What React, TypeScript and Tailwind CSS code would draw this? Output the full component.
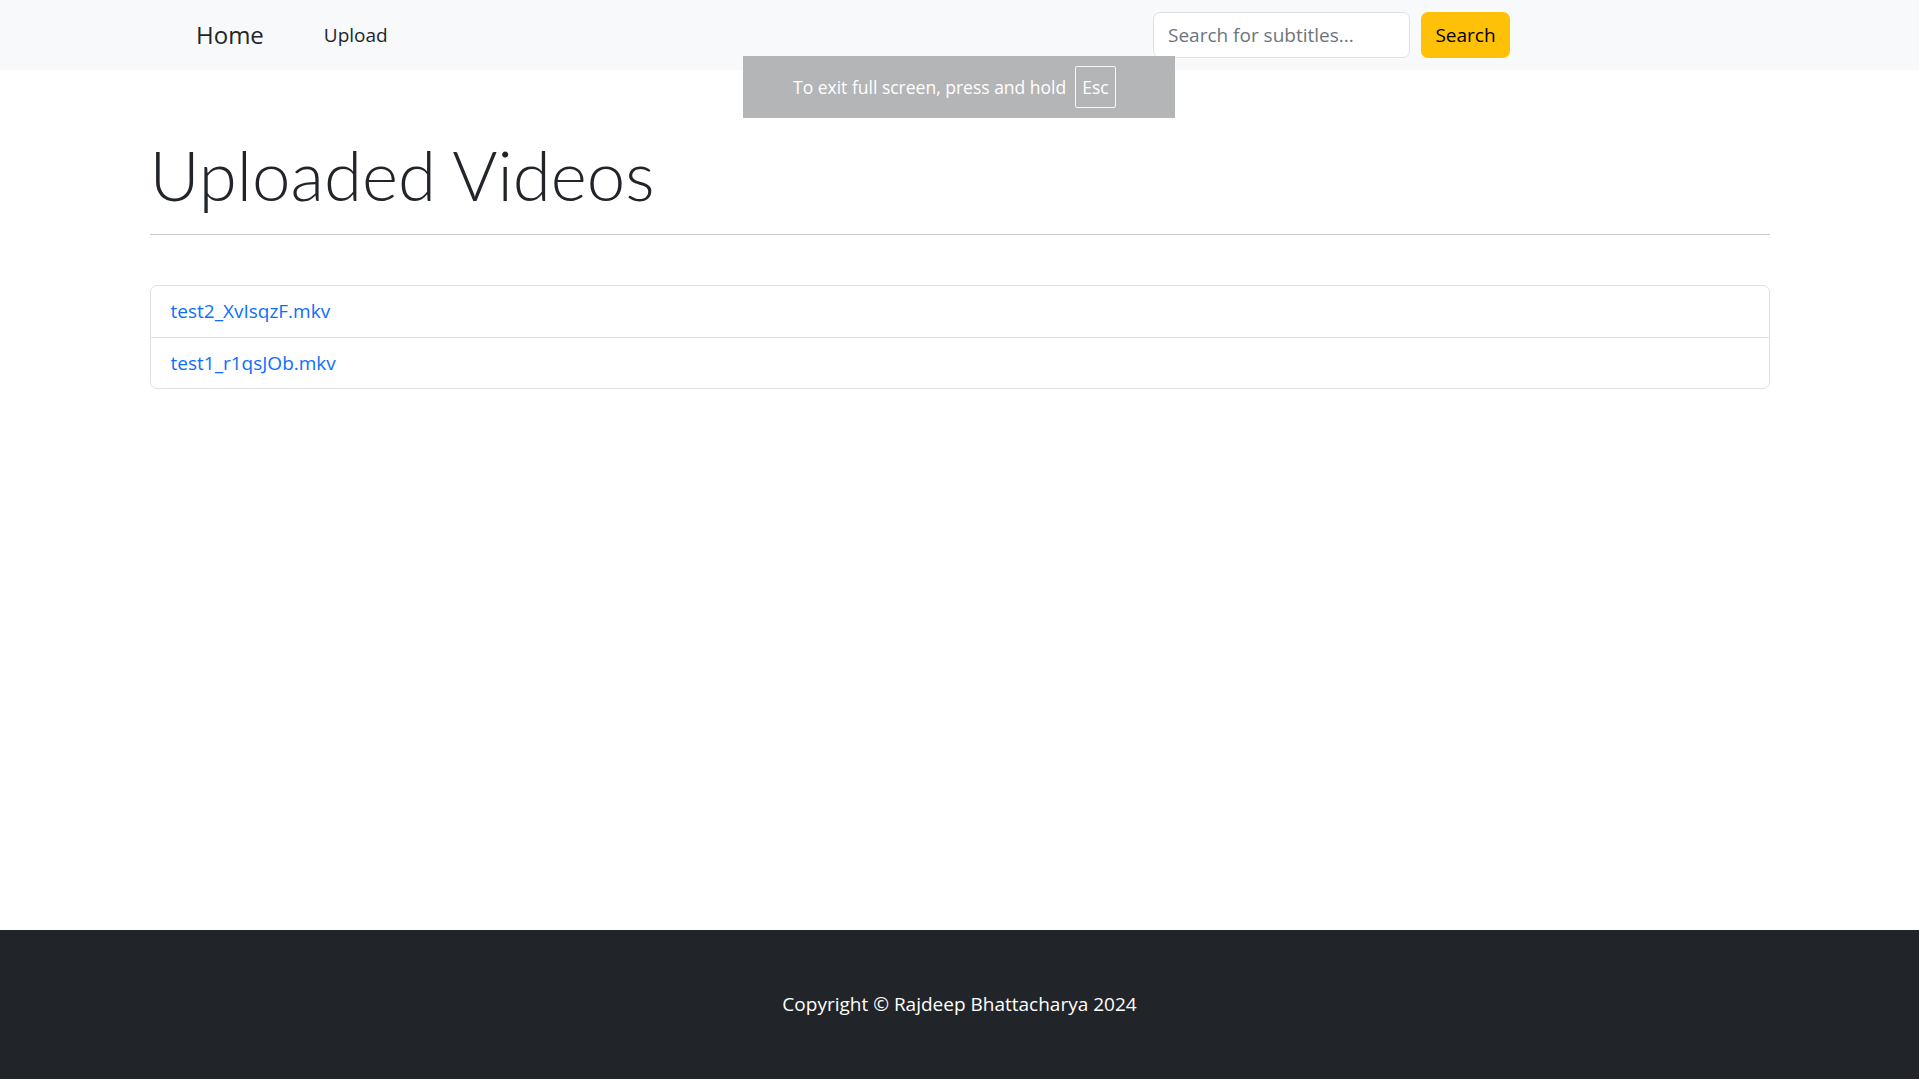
const videos = ['test2_XvIsqzF.mkv', 'test1_r1qsJOb.mkv']

export default function App() {
  return (
    <div
      className="relative min-h-screen flex flex-col bg-white text-[#212529]"
      style={{ fontFamily: '"Open Sans", "Noto Sans", sans-serif' }}
    >
      {/* Navbar */}
      <nav className="h-[70px] bg-[#f8f9fa] flex items-center">
        <div className="flex items-center w-[1314px] ml-[196px]">
          <a href="#" className="text-[24px] text-[#212529]">Home</a>
          <a href="#" className="text-[19px] text-[#212529] ml-[60px]">Upload</a>
          <form className="ml-auto flex items-center gap-[11px]" onSubmit={e => e.preventDefault()}>
            <input
              type="text"
              placeholder="Search for subtitles..."
              className="w-[257px] h-[46px] px-[14px] text-[19px] bg-white border border-[#dee2e6] rounded-[7px] placeholder:text-[#6c757d] outline-none"
            />
            <button className="w-[89px] h-[46px] bg-[#ffc107] text-[19px] text-black rounded-[7px]">
              Search
            </button>
          </form>
        </div>
      </nav>

      {/* Full screen notice */}
      <div className="absolute left-[743px] top-[56px] w-[432px] h-[62px] bg-[#b4b5b7] flex items-center pl-[50px] gap-[9px] text-white text-[17.5px]">
        <span>To exit full screen, press and hold</span>
        <span className="border border-white/90 rounded-[2px] px-[6px] h-[42px] flex items-center">Esc</span>
      </div>

      {/* Main */}
      <main className="flex-1">
        <div className="w-[1620px] mx-auto">
          <h1
            className="text-[69px] font-light leading-[1.2] mt-[64px] mb-[17px] text-[#212529]"
            style={{ fontFamily: 'Lato, "Open Sans", sans-serif' }}
          >
            Uploaded Videos
          </h1>
          <hr className="border-t border-[#c8c9ca]" />
          <ul className="mt-[50px] border border-[#dee2e6] rounded-[7px]">
            {videos.map((v, i) => (
              <li
                key={v}
                className={`h-[51px] flex items-center px-[20px] ${i > 0 ? 'border-t border-[#dee2e6]' : ''}`}
              >
                <a href="#" className="text-[19px] text-[#0d6efd]">{v}</a>
              </li>
            ))}
          </ul>
        </div>
      </main>

      {/* Footer */}
      <footer className="h-[149px] bg-[#212529] flex items-center justify-center">
        <p className="text-white text-[19px]">Copyright © Rajdeep Bhattacharya 2024</p>
      </footer>
    </div>
  )
}
